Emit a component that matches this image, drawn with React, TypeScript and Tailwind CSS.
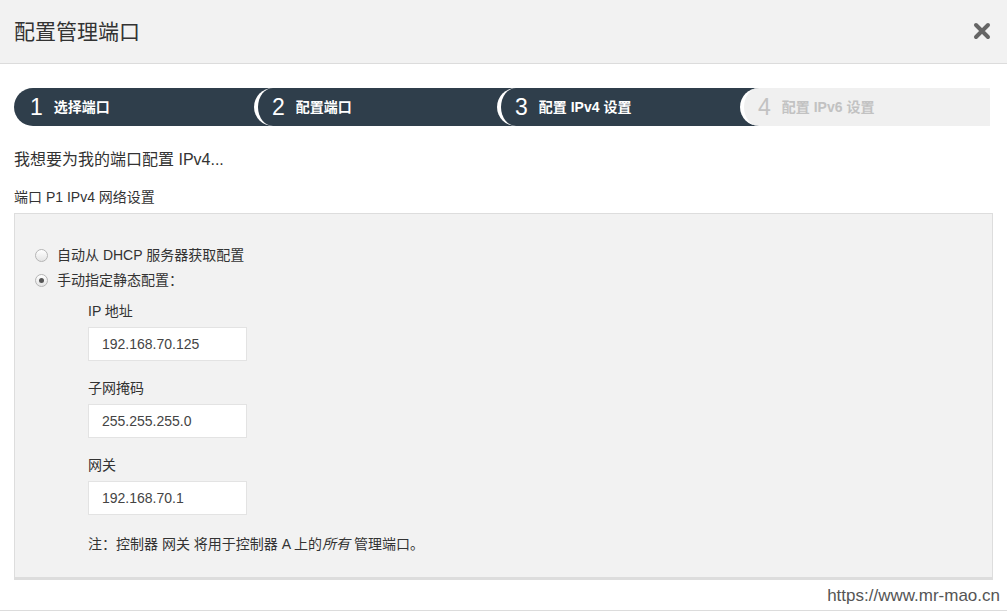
import React from "react";

const font = { fontFamily: '"Liberation Sans", Arial, "Noto Sans CJK SC", sans-serif' } as React.CSSProperties;

function Radio({ checked }: { checked?: boolean }) {
  return (
    <span className="relative inline-flex h-[13px] w-[13px] items-center justify-center rounded-full border border-[#b5b5b5] bg-gradient-to-b from-[#ffffff] to-[#e4e4e4]">
      {checked && <span className="h-[5px] w-[5px] rounded-full bg-[#555]" />}
    </span>
  );
}

function Step({ n, label, kind }: { n: string; label: string; kind: "first" | "mid" | "last" }) {
  const cls =
    kind === "first"
      ? "flex h-[38px] w-[262px] shrink-0 items-center rounded-l-[22px] pl-[16px] bg-[#2f3e4b] text-white"
      : kind === "mid"
      ? "flex h-[38px] w-[265px] shrink-0 items-center rounded-l-[22px] -ml-[22px] border-l-[4px] border-white pl-[14px] bg-[#2f3e4b] text-white"
      : "flex h-[38px] flex-1 items-center rounded-l-[22px] -ml-[22px] border-l-[4px] border-white pl-[14px] bg-[#f0f0f0] text-[#c2c2c2]";
  return (
    <div className={cls}>
      <span className="text-[23px] leading-none">{n}</span>
      <span className="ml-[11px] text-[14px] font-bold">{label}</span>
    </div>
  );
}

function Field({ label, value, first }: { label: string; value: string; first?: boolean }) {
  return (
    <div className={first ? "mt-[12px]" : "mt-[18px]"}>
      <div className="text-[14px] leading-[18px] text-[#333]">{label}</div>
      <div className="mt-[7px] flex h-[34px] w-[159px] items-center border border-[#e3e3e3] bg-white pl-[13px] text-[14px] text-[#444]">
        {value}
      </div>
    </div>
  );
}

export default function App() {
  return (
    <div className="min-h-[611px] w-[1007px] bg-white text-[#333]" style={font}>
      <div className="flex h-[64px] items-center justify-between border-b border-[#dcdcdc] bg-[#f2f2f2] pl-[14px] pr-[16px]">
        <div className="text-[21px] text-[#333]">配置管理端口</div>
        <svg width="18" height="18" viewBox="0 0 18 18" className="mb-[2px]">
          <path d="M3 3 L15 15 M15 3 L3 15" stroke="#666" strokeWidth="4" strokeLinecap="round" />
        </svg>
      </div>

      <div className="ml-[14px] mr-[17px] mt-[24px] flex">
        <Step n="1" label="选择端口" kind="first" />
        <Step n="2" label="配置端口" kind="mid" />
        <Step n="3" label="配置 IPv4 设置" kind="mid" />
        <Step n="4" label="配置 IPv6 设置" kind="last" />
      </div>

      <div className="mx-[14px]">
        <div className="mt-[24px] text-[16px] leading-[20px] text-[#333]">我想要为我的端口配置 IPv4...</div>
        <div className="mt-[18px] text-[14px] leading-[18px] text-[#333]">端口 P1 IPv4 网络设置</div>

        <div className="mt-[7px] border border-b-[3px] border-[#dddddd] bg-[#f2f2f2] pb-[23px] pl-[20px] pt-[31px]">
          <div className="flex h-[20px] items-center text-[14px]">
            <Radio />
            <span className="ml-[9px]">自动从 DHCP 服务器获取配置</span>
          </div>
          <div className="mt-[5px] flex h-[20px] items-center text-[14px]">
            <Radio checked />
            <span className="ml-[9px]">手动指定静态配置：</span>
          </div>

          <div className="pl-[53px]">
            <Field label="IP 地址" value="192.168.70.125" first />
            <Field label="子网掩码" value="255.255.255.0" />
            <Field label="网关" value="192.168.70.1" />
            <div className="mt-[19px] text-[14px] leading-[20px] text-[#333]">
              注：控制器 网关 将用于控制器 A 上的<i>所有</i> 管理端口。
            </div>
          </div>
        </div>
      </div>

      <div className="mr-[7px] mt-[7px] text-right text-[17px] leading-[18px] text-[#555]">https://www.mr-mao.cn</div>
      <div className="mt-[5px] border-t border-[#dcdcdc]" />
    </div>
  );
}
